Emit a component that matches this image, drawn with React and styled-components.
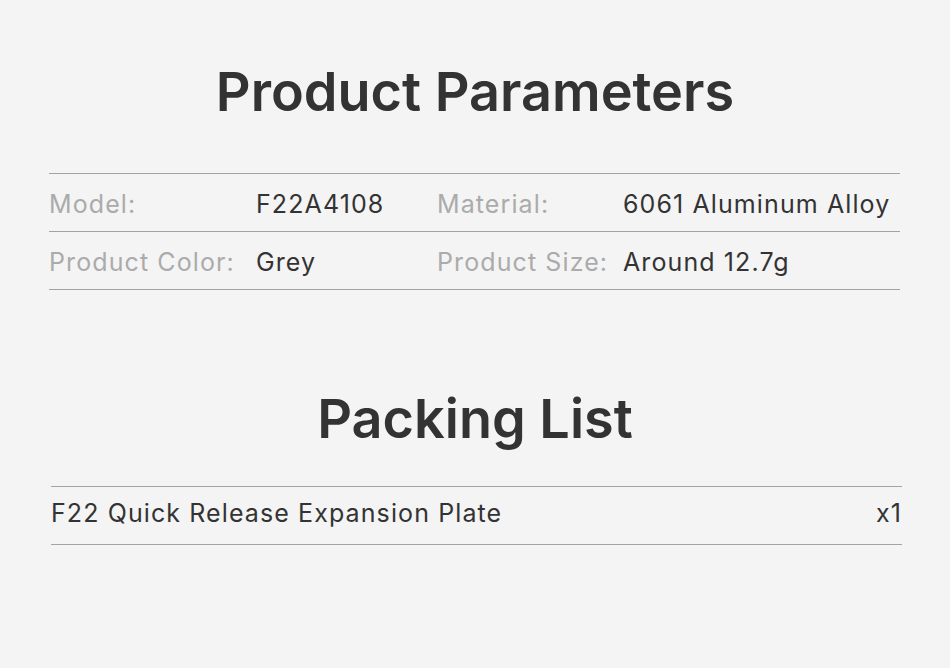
import React from 'react';
import styled, { createGlobalStyle } from 'styled-components';

const Global = createGlobalStyle`
  html, body {
    margin: 0;
    padding: 0;
    background: #f4f4f4;
  }
  body {
    font-family: Inter, "Noto Sans", sans-serif;
  }
`;

const Page = styled.div`
  width: 950px;
  height: 668px;
  background: #f4f4f4;
  display: flex;
  flex-direction: column;
  box-sizing: border-box;
  padding-top: 60px;
`;

const Title = styled.h1`
  margin: ${p => p.$top || 0}px 0 0;
  text-align: center;
  font-family: Inter, "Noto Sans", sans-serif;
  font-weight: 600;
  font-size: 54px;
  line-height: 64px;
  color: #333333;
`;

const Table = styled.div`
  margin: ${p => p.$top}px 0 0 ${p => p.$left}px;
  width: 851px;
  border-top: 1px solid #a3a3a3;
`;

const Row = styled.div`
  display: grid;
  grid-template-columns: ${p => p.$cols};
  align-items: center;
  height: 58px;
  padding: ${p => p.$compact ? '0 0 6px' : '2px 0 0'};
  box-sizing: border-box;
  border-bottom: 1px solid #a3a3a3;
  font-size: 25px;
  letter-spacing: 1.1px;
`;

const Label = styled.span`
  color: #ababab;
  font-weight: 400;
`;

const Value = styled.span`
  color: #333333;
  font-weight: 400;
  text-align: ${p => p.$right ? 'right' : 'left'};
`;

const params = [
  ['Model:', 'F22A4108', 'Material:', '6061 Aluminum Alloy'],
  ['Product Color:', 'Grey', 'Product Size:', 'Around 12.7g'],
];

export default function App() {
  return (
    <Page>
      <Global />
      <Title>Product Parameters</Title>
      <Table $top={49} $left={49}>
        {params.map((r, i) => (
          <Row key={i} $cols="207px 181px 186px 1fr">
            <Label>{r[0]}</Label>
            <Value>{r[1]}</Value>
            <Label>{r[2]}</Label>
            <Value>{r[3]}</Value>
          </Row>
        ))}
      </Table>
      <Title $top={97}>Packing List</Title>
      <Table $top={35} $left={51}>
        <Row $cols="1fr auto" $compact>
          <Value>F22 Quick Release Expansion Plate</Value>
          <Value $right>x1</Value>
        </Row>
      </Table>
    </Page>
  );
}
